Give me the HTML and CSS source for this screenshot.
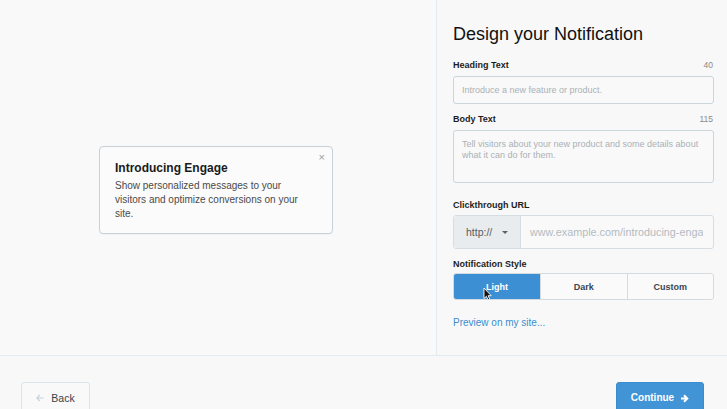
FILE: index.html
```html
<!DOCTYPE html>
<html lang="en">
<head>
<meta charset="utf-8">
<title>Design your Notification</title>
<link rel="stylesheet" href="styles.css">
</head>
<body>
<div class="main">
  <section class="preview">
    <div class="card">
      <span class="close">×</span>
      <div class="card-title">Introducing Engage</div>
      <div class="card-body">Show personalized messages to your visitors and optimize conversions on your site.</div>
    </div>
  </section>
  <section class="panel">
    <h1 class="title">Design your Notification</h1>
    <div class="field-head first"><span class="label">Heading Text</span><span class="count">40</span></div>
    <input class="input" type="text" placeholder="Introduce a new feature or product.">
    <div class="field-head body-head"><span class="label">Body Text</span><span class="count">115</span></div>
    <textarea class="textarea" placeholder="Tell visitors about your new product and some details about what it can do for them."></textarea>
    <div class="field-head url-head"><span class="label">Clickthrough URL</span></div>
    <div class="url-group">
      <div class="proto"><span>http://</span><span class="caret"></span></div>
      <div class="url-field"><span class="url-text">www.example.com/introducing-engage</span></div>
    </div>
    <div class="field-head style-head"><span class="label">Notification Style</span></div>
    <div class="segmented">
      <div class="seg active">Light
        <svg class="cursor" width="9" height="14" viewBox="0 0 9 14"><path d="M1 1 L1 11.5 L3.4 9.3 L5.2 13 L6.8 12.3 L5.1 8.7 L8.2 8.7 Z" fill="#111" stroke="#fff" stroke-width="0.9" stroke-linejoin="round"/></svg>
      </div>
      <div class="seg">Dark</div>
      <div class="seg">Custom</div>
    </div>
    <a class="preview-link" href="#">Preview on my site...</a>
  </section>
</div>
<footer class="footer">
  <button class="btn btn-back"><svg width="8" height="8" viewBox="0 0 8 8"><path d="M7.5 4 H1 M3.8 1 L0.9 4 L3.8 7" fill="none" stroke="#c6d1d8" stroke-width="1.1"/></svg><span>Back</span></button>
  <button class="btn btn-continue"><span>Continue</span><svg width="9" height="9" viewBox="0 0 9 9"><path d="M1 4.5 H7 M4 1.3 L7.3 4.5 L4 7.7" fill="none" stroke="#fff" stroke-width="2" stroke-linejoin="miter"/></svg></button>
</footer>
</body>
</html>
```
FILE: styles.css
```css
* { box-sizing: border-box; }
html, body { margin: 0; padding: 0; }
body {
  background: #f8f8f8;
  font-family: "Liberation Sans", Arial, sans-serif;
  color: #222;
  width: 727px;
  height: 409px;
  overflow: hidden;
}
.main {
  display: flex;
  height: 356px;
  border-bottom: 1px solid #e2ecf0;
}
.preview {
  flex: 0 0 437px;
  border-right: 1px solid #e2ecf0;
  padding: 146px 0 0 99px;
  background: #f9f9f9;
}
.card {
  position: relative;
  width: 234px;
  height: 88px;
  border: 1px solid #c7d1d7;
  border-radius: 4px;
  background: #fbfbfb;
  padding: 13px 15px 0 15px;
  box-shadow: 0 1px 1px rgba(0,0,0,0.03);
}
.close {
  position: absolute;
  top: 4px;
  right: 7px;
  font-size: 11px;
  line-height: 12px;
  color: #9aa0a4;
}
.card-title {
  font-size: 12px;
  line-height: 16px;
  font-weight: bold;
  color: #1a1a1a;
}
.card-body {
  margin-top: 3px;
  font-size: 10px;
  line-height: 14px;
  color: #4a4a4a;
  padding-right: 18px;
}
.panel {
  flex: 1 1 0;
  min-width: 0;
  padding: 23px 13px 0 16px;
  display: flex;
  flex-direction: column;
}
.title {
  margin: 0;
  font-size: 18px;
  line-height: 22px;
  font-weight: normal;
  color: #111;
}
.field-head {
  display: flex;
  justify-content: space-between;
  align-items: baseline;
  line-height: 12px;
}
.field-head.first { margin-top: 14px; }
.field-head.body-head { margin-top: 9px; }
.field-head.url-head { margin-top: 16px; }
.field-head.style-head { margin-top: 9px; }
.label {
  font-size: 9px;
  font-weight: bold;
  color: #1d1d1d;
}
.count {
  font-size: 8.5px;
  color: #8a8a8a;
  padding-right: 1px;
}
.input, .textarea {
  display: block;
  width: 100%;
  margin: 5px 0 0 0;
  border: 1px solid #cad5dc;
  border-radius: 3px;
  background: #f9f9f9;
  font-family: "Liberation Sans", Arial, sans-serif;
  font-size: 9px;
  color: #333;
  outline: none;
}
.input {
  height: 28px;
  padding: 0 8px;
}
.textarea {
  height: 53px;
  padding: 8px 8px;
  line-height: 11px;
  resize: none;
}
.input::placeholder, .textarea::placeholder { color: #a9b1b7; }
.url-group {
  margin-top: 4px;
  height: 34px;
  display: flex;
  border: 1px solid #d6dee3;
  border-radius: 3px;
  overflow: hidden;
  background: #f9f9f9;
  min-width: 0;
}
.proto {
  flex: 0 0 67px;
  background: #e9ecee;
  border-right: 1px solid #d6dee3;
  display: flex;
  align-items: center;
  padding-left: 12px;
  font-size: 10.5px;
  color: #555c62;
}
.caret {
  margin-left: 10px;
  width: 0;
  height: 0;
  border-left: 3px solid transparent;
  border-right: 3px solid transparent;
  border-top: 3px solid #5b6369;
}
.url-field {
  flex: 1 1 0;
  display: flex;
  align-items: center;
  padding: 0 10px 0 9px;
  min-width: 0;
}
.url-text {
  display: block;
  flex: 1 1 0;
  font-size: 10.8px;
  color: #b4bbc1;
  white-space: nowrap;
  overflow: hidden;
  min-width: 0;
}
.segmented {
  margin-top: 3px;
  height: 27px;
  display: flex;
  border: 1px solid #d3dbe0;
  border-radius: 3px;
  overflow: hidden;
}
.seg {
  position: relative;
  flex: 1 1 0;
  display: flex;
  align-items: center;
  justify-content: center;
  font-size: 9px;
  font-weight: bold;
  color: #3b4650;
  background: #fafafa;
  border-left: 1px solid #d3dbe0;
}
.seg:first-child { border-left: none; }
.seg.active {
  background: #3d8fd3;
  color: #fff;
  flex: 0 0 86px;
}
.cursor {
  position: absolute;
  left: 29px;
  top: 13px;
}
.preview-link {
  margin-top: 17px;
  font-size: 10px;
  line-height: 12px;
  color: #3a8dcf;
  text-decoration: none;
  align-self: flex-start;
}
.footer {
  height: 53px;
  display: flex;
  justify-content: space-between;
  align-items: flex-start;
  padding: 26px 23px 0 21px;
}
.btn {
  height: 32px;
  border-radius: 3px;
  display: flex;
  align-items: center;
  justify-content: center;
  font-family: "Liberation Sans", Arial, sans-serif;
  font-size: 10px;
  line-height: 12px;
  padding: 0;
}
.btn-back {
  width: 69px;
  border: 1px solid #dbe5ea;
  background: #f9f9f9;
  color: #35414b;
  gap: 7px;
}
.btn-back span { font-size: 10.5px; }
.btn-continue {
  width: 88px;
  border: 1px solid #3a8ccc;
  background: #4195d6;
  color: #fff;
  font-weight: bold;
  gap: 6px;
}
```
